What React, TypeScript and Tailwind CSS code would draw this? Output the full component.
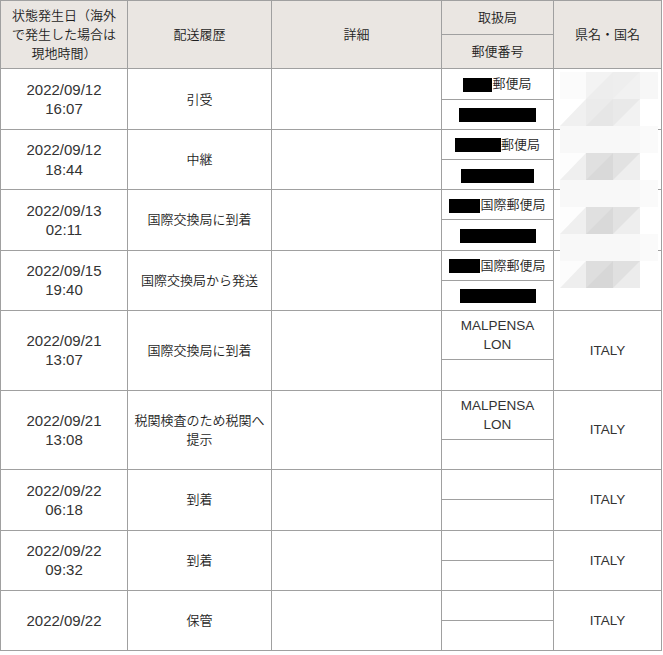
import React from "react";

type Rec = {
  date: string;
  time?: string;
  status: React.ReactNode;
  office?: React.ReactNode;
  post?: React.ReactNode;
  place?: string;
};

const Redact = ({ w }: { w: string }) => (
  <span className={`inline-block h-[14px] bg-black align-middle ${w}`} />
);

const records: Rec[] = [
  {
    date: "2022/09/12",
    time: "16:07",
    status: "引受",
    office: (
      <>
        <Redact w="w-[29px]" />
        郵便局
      </>
    ),
    post: <Redact w="w-[77px]" />,
  },
  {
    date: "2022/09/12",
    time: "18:44",
    status: "中継",
    office: (
      <>
        <Redact w="w-[46px]" />
        郵便局
      </>
    ),
    post: <Redact w="w-[73px]" />,
  },
  {
    date: "2022/09/13",
    time: "02:11",
    status: "国際交換局に到着",
    office: (
      <>
        <Redact w="w-[31px]" />
        国際郵便局
      </>
    ),
    post: <Redact w="w-[76px]" />,
  },
  {
    date: "2022/09/15",
    time: "19:40",
    status: "国際交換局から発送",
    office: (
      <>
        <Redact w="w-[31px]" />
        国際郵便局
      </>
    ),
    post: <Redact w="w-[76px]" />,
  },
  {
    date: "2022/09/21",
    time: "13:07",
    status: "国際交換局に到着",
    office: <span className="text-[13.5px] text-[#333]">MALPENSA LON</span>,
    place: "ITALY",
  },
  {
    date: "2022/09/21",
    time: "13:08",
    status: "税関検査のため税関へ提示",
    office: <span className="text-[13.5px] text-[#333]">MALPENSA LON</span>,
    place: "ITALY",
  },
  { date: "2022/09/22", time: "06:18", status: "到着", place: "ITALY" },
  { date: "2022/09/22", time: "09:32", status: "到着", place: "ITALY" },
  { date: "2022/09/22", status: "保管", place: "ITALY" },
];

// pixelated blur left over the prefecture column
const xs = [0, 26, 53, 80, 98];
const band = ["#f8f8f8", "#f8f8f8", "#f8f8f8", "#fafafa"];
const shape = [["#fdfdfd", "#efefef"], ["#e0e0e0", "#d9d9d9"], ["#e2e2e2", "#eeeeee"], ["#ffffff"]];
const mosaic: (string | string[])[][] = [
  [["#fbfbfb"], ["#f3f3f3", "#ededed"], ["#eeeeee", "#f1f1f1"], ["#f7f7f7"]],
  [["#ffffff", "#f0f0f0"], ["#ebebeb", "#e6e6e6"], ["#e9e9e9", "#f2f2f2"], ["#ffffff"]],
  band,
  shape,
  band,
  shape,
  band,
  [["#fcfcfc", "#eeeeee"], ["#dedede", "#d7d7d7"], ["#e0e0e0", "#ececec"], ["#ffffff"]],
];

function Mosaic() {
  return (
    <svg className="absolute left-[560px] top-[72px]" width="98" height="216" viewBox="0 0 98 216">
      {mosaic.map((row, r) =>
        row.map((c, i) => {
          const x0 = xs[i];
          const x1 = xs[i + 1];
          const y0 = r * 27;
          const y1 = y0 + 27;
          const cols = Array.isArray(c) ? c : [c];
          return (
            <g key={`${r}-${i}`}>
              <rect x={x0} y={y0} width={x1 - x0} height={27} fill={cols[0]} />
              {cols[1] && <polygon points={`${x1},${y0} ${x1},${y1} ${x0},${y1}`} fill={cols[1]} />}
            </g>
          );
        })
      )}
    </svg>
  );
}

const td = "border border-[#a0a0a0] px-[5px] py-[5px] text-center align-middle";
const th = "border border-[#a0a0a0] bg-[#eae6e2] px-[6px] py-[7px] text-center align-middle font-[350]";
const thTall = "border border-[#a0a0a0] bg-[#eae6e2] px-[6px] py-[3px] text-center align-middle font-[350]";

export default function App() {
  return (
    <div className="min-h-screen bg-white">
      <div
        className="relative w-[661px] text-[13px] leading-[19.2px] font-[350] text-[#1e1e1e]"
        style={{ fontFamily: '"Liberation Sans", "Noto Sans CJK JP", sans-serif' }}
      >
        <table className="w-[661px] table-fixed border-collapse">
          <colgroup>
            <col className="w-[127px]" />
            <col className="w-[144px]" />
            <col className="w-[170px]" />
            <col className="w-[112px]" />
            <col className="w-[108px]" />
          </colgroup>
          <thead>
            <tr>
              <th rowSpan={2} className={thTall}>
                状態発生日（海外で発生した場合は現地時間）
              </th>
              <th rowSpan={2} className={thTall}>配送履歴</th>
              <th rowSpan={2} className={thTall}>詳細</th>
              <th className={th}>取扱局</th>
              <th rowSpan={2} className={thTall}>県名・国名</th>
            </tr>
            <tr>
              <th className={th}>郵便番号</th>
            </tr>
          </thead>
          <tbody>
            {records.map((r, i) => (
              <React.Fragment key={i}>
                <tr>
                  <td rowSpan={2} className={`${td} text-[15px] text-[#333]`}>
                    {r.date}
                    {r.time && (
                      <>
                        <br />
                        {r.time}
                      </>
                    )}
                  </td>
                  <td rowSpan={2} className={td}>{r.status}</td>
                  <td rowSpan={2} className={td}></td>
                  <td className={td}>{r.office ?? "\u00a0"}</td>
                  <td rowSpan={2} className={`${td} text-[13.5px] text-[#333]`}>{r.place ?? ""}</td>
                </tr>
                <tr>
                  <td className={td}>{r.post ?? "\u00a0"}</td>
                </tr>
              </React.Fragment>
            ))}
          </tbody>
        </table>
        <Mosaic />
      </div>
    </div>
  );
}
